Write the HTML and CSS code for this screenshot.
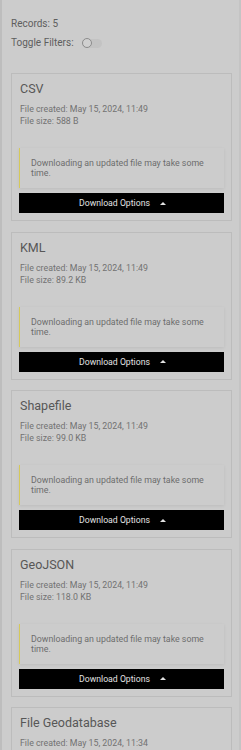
FILE: index.html
```html
<!DOCTYPE html>
<html>
<head>
<meta charset="utf-8">
<link rel="stylesheet" href="styles.css">
</head>
<body>
<div class="panel">
  <div class="records">Records: 5</div>
  <div class="toggle-row">Toggle Filters:<span class="switch"><span class="knob"></span></span></div>
  <div class="list">
    <div class="card">
      <div class="title">CSV</div>
      <div class="meta">File created: May 15, 2024, 11:49<br>File size: 588 B</div>
      <div class="notice">Downloading an updated file may take some time.</div>
      <div class="btn">Download Options <span class="caret"></span></div>
    </div>
    <div class="card">
      <div class="title">KML</div>
      <div class="meta">File created: May 15, 2024, 11:49<br>File size: 89.2 KB</div>
      <div class="notice">Downloading an updated file may take some time.</div>
      <div class="btn">Download Options <span class="caret"></span></div>
    </div>
    <div class="card">
      <div class="title">Shapefile</div>
      <div class="meta">File created: May 15, 2024, 11:49<br>File size: 99.0 KB</div>
      <div class="notice">Downloading an updated file may take some time.</div>
      <div class="btn">Download Options <span class="caret"></span></div>
    </div>
    <div class="card">
      <div class="title">GeoJSON</div>
      <div class="meta">File created: May 15, 2024, 11:49<br>File size: 118.0 KB</div>
      <div class="notice">Downloading an updated file may take some time.</div>
      <div class="btn">Download Options <span class="caret"></span></div>
    </div>
    <div class="card">
      <div class="title">File Geodatabase</div>
      <div class="meta">File created: May 15, 2024, 11:34</div>
    </div>
  </div>
</div>
</body>
</html>
```
FILE: styles.css
```css
html, body {
  margin: 0;
  padding: 0;
  background: #cccccc;
  height: 750px;
  overflow: hidden;
}
.panel {
  font-family: Roboto, "Liberation Sans", sans-serif;
  color: #5e5e5e;
  border-left: 2px solid #bdbdbd;
  border-right: 2px solid #c4c4c4;
  padding: 18px 7px 0 9px;
  min-height: 750px;
  box-sizing: border-box;
}
.records {
  font-size: 10px;
  line-height: 12px;
}
.toggle-row {
  font-size: 10px;
  line-height: 12px;
  margin-top: 7px;
  display: flex;
  align-items: center;
}
.switch {
  display: inline-block;
  width: 20px;
  height: 9px;
  border-radius: 5px;
  background: #c3c3c3;
  margin-left: 8px;
  position: relative;
  box-sizing: border-box;
}
.knob {
  position: absolute;
  left: 0;
  top: -0.5px;
  width: 10px;
  height: 10px;
  border-radius: 50%;
  border: 1px solid #8c8c8c;
  background: #d0d0d0;
  box-sizing: border-box;
}
.list {
  margin-top: 24px;
  display: flex;
  flex-direction: column;
  gap: 10.5px;
}
.card {
  border: 1px solid #bcbcbc;
  padding: 8px 7px 7px 7px;
  display: flex;
  flex-direction: column;
}
.title {
  font-size: 12.5px;
  line-height: 14px;
  color: #575757;
  padding-left: 1px;
}
.meta {
  font-size: 8.8px;
  line-height: 12px;
  color: #727272;
  margin-top: 7px;
  padding-left: 1px;
}
.notice {
  margin-top: 21px;
  border-left: 1px solid #d6c95a;
  padding: 10px 12px 10px 11px;
  font-size: 8.8px;
  line-height: 10px;
  color: #6c6c6c;
  box-shadow: 0 1px 3px rgba(0,0,0,0.08);
}
.btn {
  margin-top: 5px;
  height: 20px;
  background: #000;
  color: #e2e2e2;
  font-size: 8.7px;
  display: flex;
  align-items: center;
  justify-content: center;
  gap: 10px;
  padding-left: 2px;
}
.caret {
  width: 0;
  height: 0;
  border-left: 3px solid transparent;
  border-right: 3px solid transparent;
  border-bottom: 3px solid #e2e2e2;
}
```
